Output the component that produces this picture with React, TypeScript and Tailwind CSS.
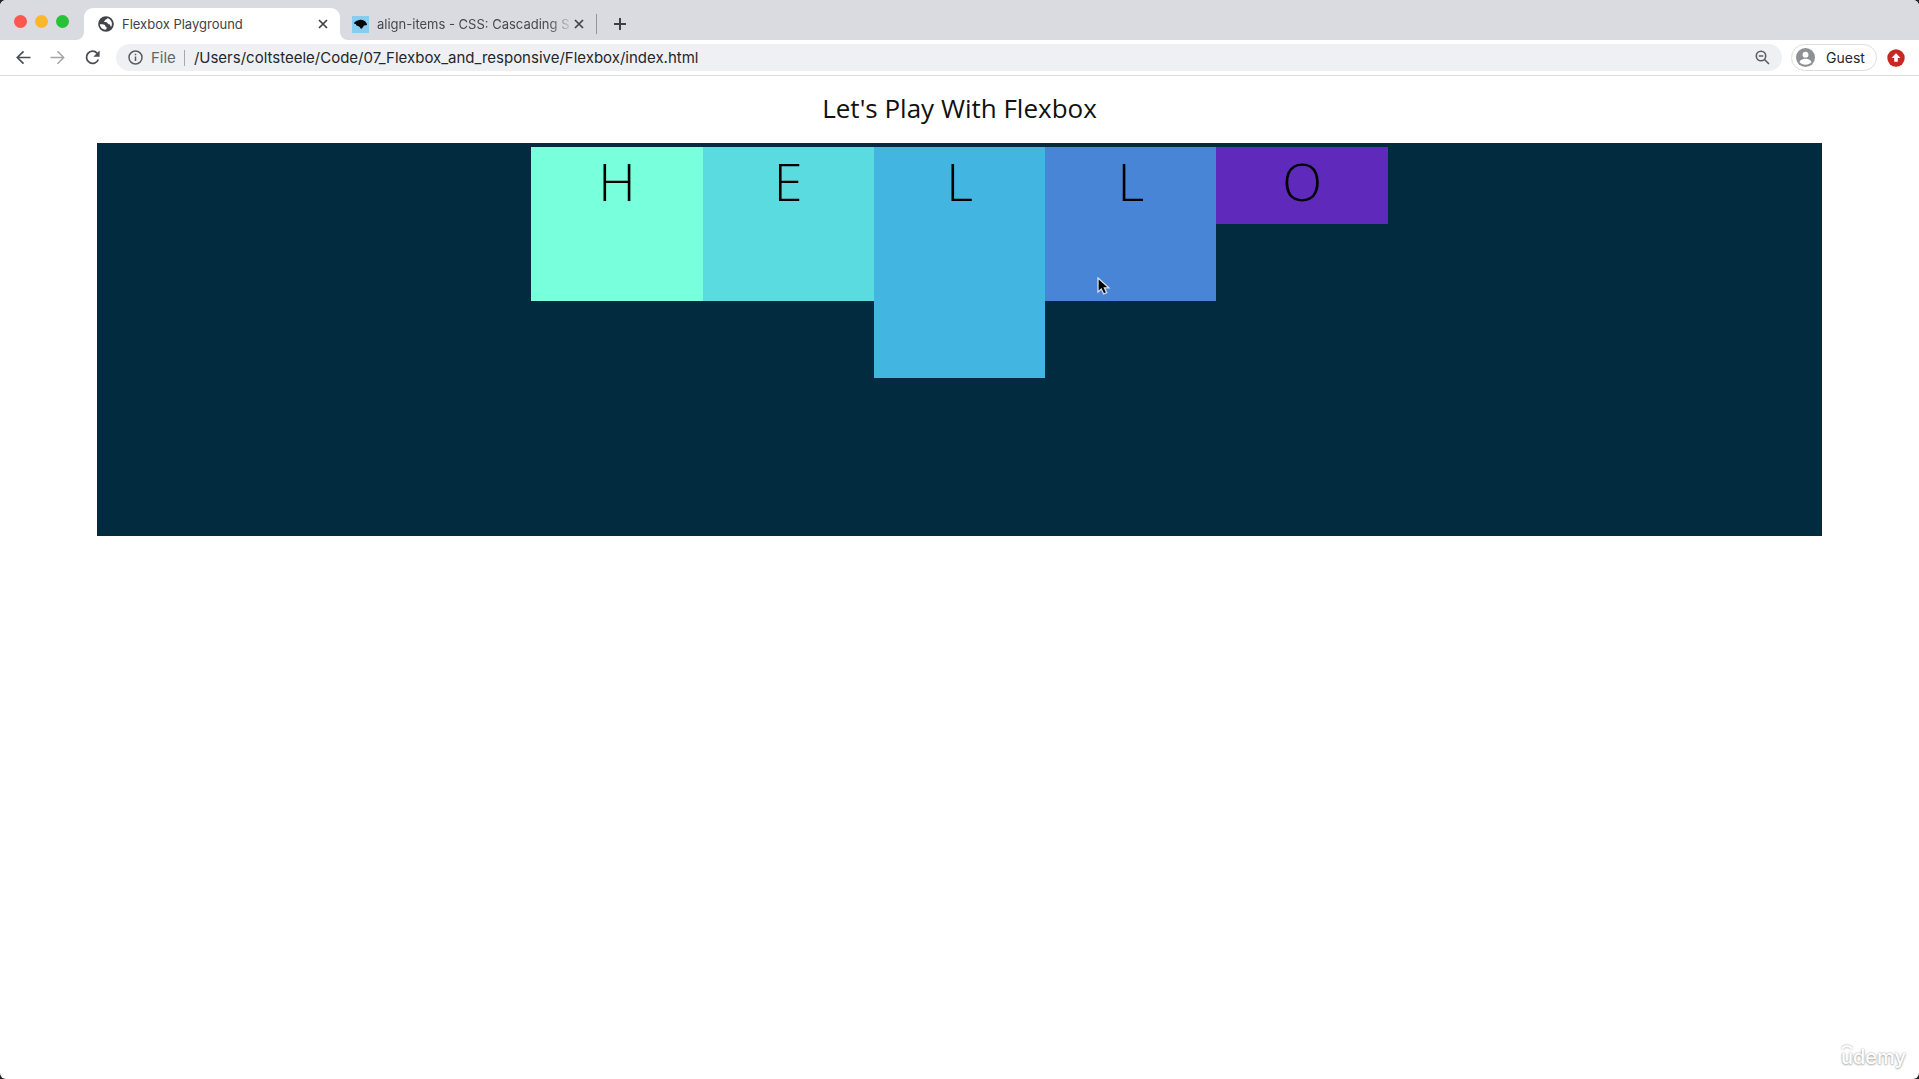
import React from "react";

const boxes = [
  { letter: "H", style: "h-[154px] bg-[#78ffdb]" },
  { letter: "E", style: "h-[154px] bg-[#5adbdf]" },
  { letter: "L", style: "h-[231px] bg-[#42b5e0]" },
  { letter: "L", style: "h-[154px] bg-[#4985d6]" },
  { letter: "O", style: "h-[77px] bg-[#5f2abb]" },
];

function GlobeIcon() {
  return (
    <svg className="size-4 shrink-0" viewBox="0 0 16 16" aria-hidden="true">
      <circle cx="8" cy="8" r="7.8" fill="#414449" />
      <path
        d="M1.8 8.3c1.8-.3 4.3 0 5.200.9.6.7.3 1.500 1 1.800.7.3.8.8.700 1.600-.1.700-.8 1-1.700 1.100A6.100 6.100 0 0 1 1.800 8.300Z"
        fill="#fff"
      />
      <path
        d="M9.500 2c-.2 1-1 1.300-1.700 1.600-.7.3-.6 1-1.300 1.300-.6.300-.5 1 .1 1.200.8.300 1.900-.1 2.500.6.700.8 1.100 1.500 2.100 1.500.9 0 1.100.8 1.100 1.500 0 .7.500 1 1.100.7A6.300 6.300 0 0 0 9.500 2Z"
        fill="#fff"
      />
    </svg>
  );
}

function MdnIcon() {
  return (
    <svg className="size-[17px] shrink-0" viewBox="0 0 16 16" aria-hidden="true">
      <rect width="16" height="16" fill="#86cdf0" />
      <path
        d="M1.800 6.500C2.800 5 4.600 4 6.800 3.700c2.800-.4 5.200.4 6.400 2.300.6.900 1.300 2.100.8 2.500-.8.500-1.800.2-2.600.5-.8.400-.7 1.200-1.200 1.900-.5.800-1.300 1.300-2 1-.3-.8-.5-1.400-1.300-1.900C5.800 9.400 5 9.500 4.300 9c-.6-.5-.3-1-.9-1.400C2.800 7.300 2 7.500 1.800 6.500Z"
        fill="#05080a"
      />
    </svg>
  );
}

function CloseIcon() {
  return (
    <svg className="size-[10px]" viewBox="0 0 10 10" fill="none" stroke="#3f4246" strokeWidth="1.700" aria-hidden="true">
      <path d="M1 1l8 8M9 1L1 9" />
    </svg>
  );
}

function TabStrip() {
  return (
    <div className="flex h-10 items-end bg-[#d9dbe0]">
      <div className="mb-[12px] ml-[14px] flex gap-2">
        <button aria-label="Close window" className="size-[13px] rounded-full bg-[#fb5650]" />
        <button aria-label="Minimize window" className="size-[13px] rounded-full bg-[#fbb62d]" />
        <button aria-label="Zoom window" className="size-[13px] rounded-full bg-[#27c238]" />
      </div>
      <div className="ml-[7px] size-2 shrink-0 bg-white">
        <div className="size-2 rounded-br-lg bg-[#d9dbe0]" />
      </div>
      <div className="flex h-8 w-[256px] items-center rounded-t-[9px] bg-white pl-[14px] pr-[12px]">
        <GlobeIcon />
        <span className="ml-2 flex-1 whitespace-nowrap text-[13px] leading-4 text-[#3f4246]">Flexbox Playground</span>
        <button aria-label="Close tab">
          <CloseIcon />
        </button>
      </div>
      <div className="size-2 shrink-0 bg-white">
        <div className="size-2 rounded-bl-lg bg-[#d9dbe0]" />
      </div>
      <div className="flex h-8 w-[248px] items-center pl-1">
        <MdnIcon />
        <span className="ml-2 w-[196px] shrink-0 whitespace-nowrap text-[13px] leading-4 text-[#45484e] [mask-image:linear-gradient(to_right,black_172px,transparent_196px)]">
          align-items - CSS: Cascading S
        </span>
        <button aria-label="Close tab" className="ml-px">
          <CloseIcon />
        </button>
        <div className="ml-[12px] h-5 w-px shrink-0 bg-[#93969b]" />
      </div>
      <button aria-label="New tab" className="mb-[9px] ml-[17px]">
        <svg className="size-[14px]" viewBox="0 0 14 14" fill="none" stroke="#3c3f43" strokeWidth="2" aria-hidden="true">
          <path d="M7 1v12M1 7h12" />
        </svg>
      </button>
    </div>
  );
}

function Toolbar() {
  return (
    <div className="flex h-9 items-center border-b border-[#dcdddf] bg-white pl-4">
      <button aria-label="Back">
        <svg className="size-[15px]" viewBox="0 0 15 15" fill="none" stroke="#4b4e52" strokeWidth="1.700" aria-hidden="true">
          <path d="M14.500 7.500H1.500M7.500 1.300L1.300 7.500l6.200 6.200" />
        </svg>
      </button>
      <button aria-label="Forward" className="ml-[19px]">
        <svg className="size-[15px]" viewBox="0 0 15 15" fill="none" stroke="#a3a5a8" strokeWidth="1.500" aria-hidden="true">
          <path d="M.5 7.500h13M7.500 1.300l6.200 6.200-6.200 6.200" />
        </svg>
      </button>
      <button aria-label="Reload" className="ml-[20px]">
        <svg className="size-[15px]" viewBox="0 0 15 15" fill="none" aria-hidden="true">
          <path d="M12.200 3.300A6.100 6.100 0 1 0 13.300 9.500" stroke="#4b4e52" strokeWidth="1.800" />
          <path d="M14.600.5v6.300H8.300z" fill="#4b4e52" />
        </svg>
      </button>
      <div className="ml-4 flex h-[27px] flex-1 items-center rounded-full bg-[#eff0f4] pl-3 pr-3">
        <svg className="size-[15px] shrink-0" viewBox="0 0 15 15" fill="none" stroke="#5a5d61" strokeWidth="1.500" aria-hidden="true">
          <circle cx="7.500" cy="7.500" r="6.500" />
          <path d="M7.500 6.600v4.400M7.500 3.800v1.500" />
        </svg>
        <span className="ml-2 text-[15px] leading-5 text-[#63666a]">File</span>
        <div className="ml-2 h-4 w-px bg-[#a6a8ac]" />
        <input
          aria-label="Address"
          className="ml-[9px] min-w-0 flex-1 bg-transparent text-[15px] leading-5 text-[#25272a] outline-none"
          defaultValue="/Users/coltsteele/Code/07_Flexbox_and_responsive/Flexbox/index.html"
        />
        <button aria-label="Zoom level">
          <svg className="size-[15px]" viewBox="0 0 15 15" fill="none" stroke="#5a5d61" strokeWidth="1.600" aria-hidden="true">
            <circle cx="6" cy="6" r="4.700" />
            <path d="M9.500 9.500l4.500 4.500M3.800 6h4.400" />
          </svg>
        </button>
      </div>
      <button className="ml-[9px] flex h-[27px] w-[86px] items-center rounded-full border border-[#dddee1] bg-white pl-1 text-sm leading-5 text-[#25272a]">
        <svg className="size-[19px] shrink-0" viewBox="0 0 20 20" aria-hidden="true">
          <circle cx="10" cy="10" r="10" fill="#8d9196" />
          <circle cx="10" cy="7" r="3.100" fill="#fff" />
          <path d="M3.800 14.900c0-2.300 3.600-3.700 6.200-3.700s6.200 1.400 6.200 3.700c-1.300 1.600-3.600 2.600-6.200 2.600s-4.900-1-6.200-2.600Z" fill="#fff" />
        </svg>
        <span className="ml-[11px]">Guest</span>
      </button>
      <button aria-label="Update" className="ml-[10px] mr-[14px]">
        <svg className="size-[18px]" viewBox="0 0 18 18" aria-hidden="true">
          <circle cx="9" cy="9" r="8.700" fill="#c52a22" />
          <path d="M9 4.300l4.500 4.800h-2.700v3.700H7.200V9.100H4.500z" fill="#fff" />
        </svg>
      </button>
    </div>
  );
}

export default function App() {
  return (
    <div className="bg-[#222]">
      <div className="relative flex min-h-screen flex-col overflow-hidden rounded-md bg-white font-['Inter','Liberation_Sans',sans-serif]">
        <TabStrip />
        <Toolbar />
        <main className="mx-[97px] font-['Open_Sans',sans-serif] text-black">
          <h1 className="pb-[15px] pt-3 text-center text-[26px] leading-[40px] text-[#111]">Let's Play With Flexbox</h1>
          <section className="relative flex h-[393px] items-start justify-center border-4 border-[#032b40] bg-[#032b40] px-[2px]">
            {boxes.map((box, i) => (
              <div key={i} className={"w-[10%] text-center text-[52px] font-light leading-[67px] " + box.style}>
                {box.letter}
              </div>
            ))}
            <svg className="absolute left-[996px] top-[130px] h-[26px] w-[17px]" viewBox="0 0 17 26" fill="#030608" stroke="#d9deea" strokeWidth="1.300" aria-hidden="true">
              <path d="M1 1v14l3.300-3 2.400 5 3-1.300-2.300-4.900h4.500z" />
            </svg>
          </section>
        </main>
        <div className="absolute bottom-[8px] right-[13px] text-[20px] font-medium leading-[28px] text-white [text-shadow:0_0_2px_#999,0_1px_2px_#bbb]">
          udemy
          <svg className="absolute left-0 top-0 h-[7px] w-[12px] drop-shadow-[0_0_1px_#999]" viewBox="0 0 12 7" fill="none" stroke="#fff" strokeWidth="2" aria-hidden="true">
            <path d="M1 5.500Q6 .5 11 5.500" />
          </svg>
        </div>
      </div>
    </div>
  );
}
